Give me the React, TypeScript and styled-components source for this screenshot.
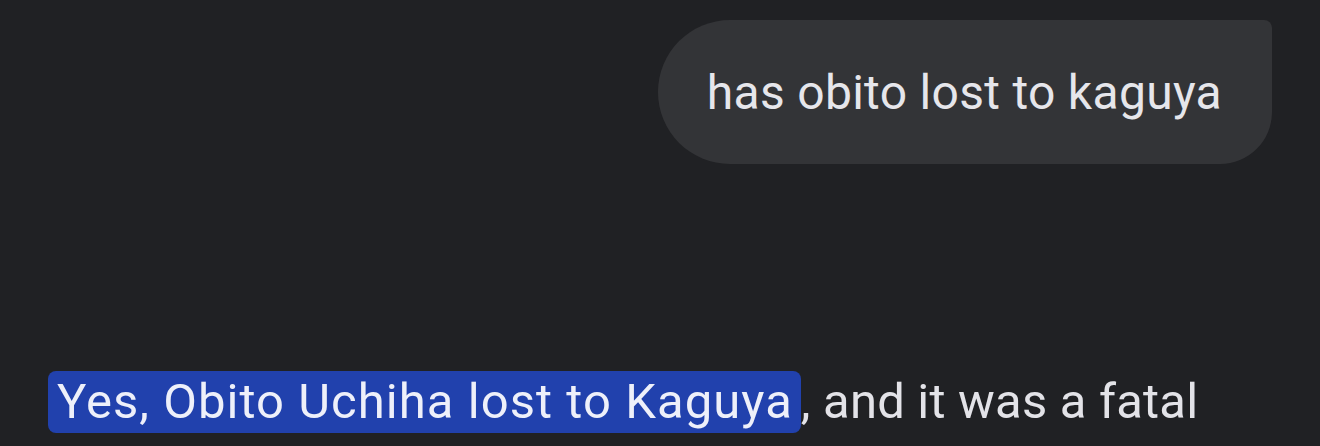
import styled, { createGlobalStyle } from "styled-components"

const GlobalStyle = createGlobalStyle`
  html, body {
    margin: 0;
    padding: 0;
    background: #202124;
  }
  body {
    font-family: Roboto, "Noto Sans", "Liberation Sans", sans-serif;
    color: #e3e3e8;
    overflow: hidden;
  }
`

const Page = styled.div`
  width: 1320px;
  height: 446px;
  box-sizing: border-box;
  padding: 20px 48px 0 48px;
  background: #202124;
  display: flex;
  flex-direction: column;
`

const UserRow = styled.div`
  display: flex;
  justify-content: flex-end;
`

const UserBubble = styled.div`
  height: 144px;
  box-sizing: border-box;
  padding: 0 50px 0 49px;
  display: flex;
  align-items: center;
  background: #333437;
  border-radius: 72px 8px 52px 72px;
  font-size: 48px;
  letter-spacing: 0.3px;
  color: #e6e6eb;
`

const Answer = styled.p`
  margin: 207px 0 0 0;
  font-size: 49px;
  line-height: 62px;
  letter-spacing: 0.2px;
  color: #e3e3e8;
  white-space: nowrap;
`

const Highlight = styled.span`
  display: inline-block;
  background: #2141ad;
  border-radius: 8px;
  padding: 0 8px 0 9px;
  height: 62px;
  letter-spacing: 1.05px;
  color: #eef0fa;
`

export default function App() {
  return (
    <>
      <GlobalStyle />
      <Page>
        <UserRow>
          <UserBubble>has obito lost to kaguya</UserBubble>
        </UserRow>
        <Answer>
          <Highlight>Yes, Obito Uchiha lost to Kaguya</Highlight>, and it was a fatal
        </Answer>
      </Page>
    </>
  )
}
